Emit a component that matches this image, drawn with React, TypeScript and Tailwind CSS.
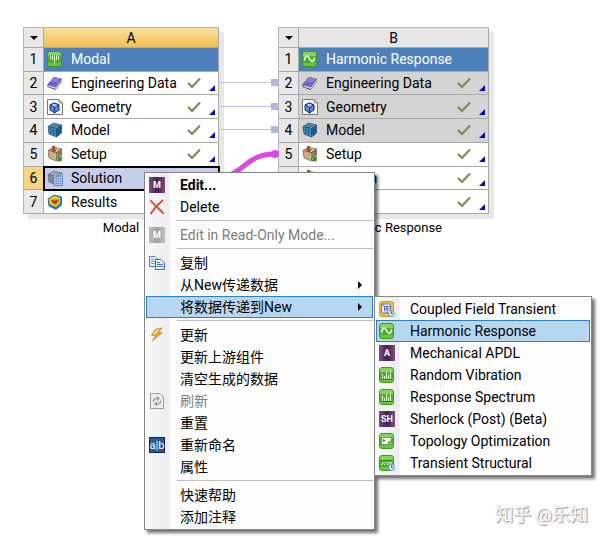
import type { ReactNode } from 'react'

type IconName =
  | 'modal'
  | 'harmonic'
  | 'random'
  | 'topology'
  | 'transient'
  | 'coupled'
  | 'book'
  | 'geometry'
  | 'model'
  | 'setup'
  | 'solution'
  | 'results'
  | 'delete'
  | 'copy'
  | 'update'
  | 'refresh'

interface Cell {
  label: string
  icon: IconName
  shared?: boolean
  selected?: boolean
  status?: boolean
}

interface MenuEntry {
  label: string
  icon?: IconName
  badge?: { text: string; className: string }
  bold?: boolean
  disabled?: boolean
  active?: boolean
  submenu?: boolean
}

const purple = 'bg-linear-to-r from-[#7a5084] via-[#43214f] to-[#7a5084] text-[9px] text-white font-bold'
const grey = 'bg-linear-to-r from-[#bdbdbd] via-[#a2a2a2] to-[#bdbdbd] text-[9px] text-white font-bold'
const rename = 'bg-[#2b5794] border border-[#10264a] text-[11px] text-white'

const modalCells: Cell[] = [
  { label: 'Engineering Data', icon: 'book', status: true },
  { label: 'Geometry', icon: 'geometry', status: true },
  { label: 'Model', icon: 'model', status: true },
  { label: 'Setup', icon: 'setup', status: true },
  { label: 'Solution', icon: 'solution', selected: true },
  { label: 'Results', icon: 'results' },
]

const harmonicCells: Cell[] = [
  { label: 'Engineering Data', icon: 'book', shared: true, status: true },
  { label: 'Geometry', icon: 'geometry', shared: true, status: true },
  { label: 'Model', icon: 'model', shared: true, status: true },
  { label: 'Setup', icon: 'setup', status: true },
  { label: 'Solution', icon: 'setup', status: true },
  { label: 'Results', icon: 'results', status: true },
]

const contextGroups: MenuEntry[][] = [
  [
    { label: 'Edit...', badge: { text: 'M', className: purple }, bold: true },
    { label: 'Delete', icon: 'delete' },
  ],
  [
    {
      label: 'Edit in Read-Only Mode...',
      badge: { text: 'M', className: grey },
      disabled: true,
    },
  ],
  [
    { label: '复制', icon: 'copy' },
    { label: '从New传递数据', submenu: true },
    { label: '将数据传递到New', submenu: true, active: true },
  ],
  [
    { label: '更新', icon: 'update' },
    { label: '更新上游组件' },
    { label: '清空生成的数据' },
    { label: '刷新', icon: 'refresh', disabled: true },
    { label: '重置' },
    { label: '重新命名', badge: { text: 'a|b', className: rename } },
    { label: '属性' },
  ],
  [{ label: '快速帮助' }, { label: '添加注释' }],
]

const transferGroups: MenuEntry[][] = [
  [
    { label: 'Coupled Field Transient', icon: 'coupled' },
    { label: 'Harmonic Response', icon: 'harmonic', active: true },
    { label: 'Mechanical APDL', badge: { text: 'A', className: purple } },
    { label: 'Random Vibration', icon: 'random' },
    { label: 'Response Spectrum', icon: 'random' },
    { label: 'Sherlock (Post) (Beta)', badge: { text: 'SH', className: purple } },
    { label: 'Topology Optimization', icon: 'topology' },
    { label: 'Transient Structural', icon: 'transient' },
  ],
]

function GreenTile({ children }: { children: ReactNode }) {
  return (
    <>
      <rect x="0.5" y="0.5" width="14" height="15" rx="2.5" fill="#4fae28" stroke="#3f9a20" />
      <path d="M1 3a2 2 0 0 1 2-2h9a2 2 0 0 1 2 2v2H1z" fill="#86d35f" />
      <path d="M1 12h13v1a2 2 0 0 1-2 2H3a2 2 0 0 1-2-2z" fill="#6cc63d" />
      {children}
    </>
  )
}

// leaning cube shared by the model, setup and solution icons
function Cube({ top, left, right, stroke }: Record<'top' | 'left' | 'right' | 'stroke', string>) {
  return (
    <g stroke={stroke} strokeWidth="0.7" strokeLinejoin="round">
      <path d="M1 4.500 6.500 1 14.500 3 9.500 6.500z" fill={top} />
      <path d="M1 4.500l8.500 2V15L2 12z" fill={left} />
      <path d="M9.500 6.500 14.500 3v8L9.500 15z" fill={right} />
    </g>
  )
}

const drawings: Record<IconName, ReactNode> = {
  modal: (
    <GreenTile>
      <path d="M2 4.500h11" stroke="#2b7a12" />
      <path d="M3.500 4v4M5.500 4v5M7.500 4v8M9.500 4v5M11.500 4v4" stroke="#eaffdc" fill="none" />
    </GreenTile>
  ),
  harmonic: (
    <GreenTile>
      <path
        d="M2.500 9C3.500 4 6 4 7.500 7.500S11.500 12 12.500 7"
        stroke="#fff"
        strokeWidth="1.6"
        strokeLinecap="round"
        fill="none"
      />
    </GreenTile>
  ),
  random: (
    <GreenTile>
      <path d="M2 12.500h11" stroke="#2b7a12" />
      <path d="M3.500 12V7M5.500 12V9M7.500 12V5M9.500 12V8M11.500 12V4" stroke="#eaffdc" fill="none" />
    </GreenTile>
  ),
  topology: (
    <GreenTile>
      <rect x="2.500" y="4.500" width="10" height="7" fill="#fff" stroke="#2b7a12" strokeWidth="0.600" />
      <path d="M4 6l3 1.500L4 9zM11.500 7v3.500H8z" fill="#338818" />
    </GreenTile>
  ),
  transient: (
    <GreenTile>
      <path d="M2 5.500h11" stroke="#2d7c13" />
      <path d="M2.500 10 5 6.500M5.500 10 8 6.500M8.500 10 11 6.500M11 10l2-3" stroke="#f1ffe8" fill="none" />
      <circle cx="12.500" cy="12.500" r="3" fill="#dbe8ff" stroke="#6f91cf" />
      <path d="M12.500 10.500v2h1.500" stroke="#34569b" fill="none" />
    </GreenTile>
  ),
  coupled: (
    <>
      <rect x="0.5" y="0.5" width="14" height="15" rx="2.5" fill="#efbd40" stroke="#d39c27" />
      <rect x="2.500" y="3" width="9" height="9" rx="1" fill="#e9ecf8" stroke="#6c79ae" />
      <path d="M5.500 10V5.500h6M5.500 8h6M8 5.500V12M2.500 3l3 2.500" stroke="#5268b0" fill="none" />
      <circle cx="12.500" cy="12.500" r="3" fill="#dbe8ff" stroke="#6f91cf" />
      <path d="M12.500 10.500v2h1.500" stroke="#34569b" fill="none" />
    </>
  ),
  book: (
    <>
      <path d="M.5 9.500 7 2l8 2v2.500L8.500 15 .5 12z" fill="#43358b" />
      <path d="M.5 9.500 7 2l8 2-6.500 8.500z" fill="#7361bd" />
      <path d="M3.500 6.500 7 2l7 1.700-3.200 4z" fill="#8c7cd0" />
      <path d="M8.700 12.500 15 4.500v1.500l-6.300 8-7.500-2.500.3-1.200z" fill="#e6e2f6" />
    </>
  ),
  geometry: (
    <>
      <path d="M.5.500H12l3.500 3.500v11.500H.5z" fill="#fbfbfb" stroke="#777" />
      <path d="M12 .5V4h3.500z" fill="#ddd" stroke="#777" strokeWidth="0.7" />
      <path d="M3 6 7.500 4 12 6v5L7.500 14 3 11z" fill="#5f88d6" stroke="#142f70" />
      <path d="M3 6l4.500 2.500L12 6 7.500 4z" fill="#a9c6f4" stroke="#142f70" />
      <path d="M7.500 8.500V14" stroke="#142f70" />
    </>
  ),
  model: (
    <>
      <Cube top="#86c8e4" left="#4a98c2" right="#2b6b96" stroke="#174a6d" />
      <path
        d="M3.800 5.200v7.500M6.600 5.900v8M1.300 7l8.200 2.200L14.500 5.500M1.600 9.500l7.900 2.600 5-3.600M11.200 5.300v8.200M12.900 4.200v8M2.900 3.300l8.300 2M4.700 2.200l8.200 2M3.800 5.200 9.200 1.700M6.600 5.900l5.300-3.500"
        stroke="#174a6d"
        strokeWidth="0.6"
        fill="none"
      />
    </>
  ),
  setup: (
    <>
      <Cube top="#dccbaa" left="#c8b08a" right="#8f744f" stroke="#6f5a3d" />
      <path d="M5 0h3v3h2L7 7 3.500 3H5z" fill="#b5482f" />
      <path d="M8.500 9.500 10 8l3 3 2-2v6.500H8.500l2.500-2.500z" fill="#3f8f2c" stroke="#e8f3df" strokeWidth="0.5" />
    </>
  ),
  solution: (
    <>
      <Cube top="#a9adb5" left="#858a93" right="#686d76" stroke="#5d6067" />
      <rect x="7" y="4" width="8.500" height="11.500" fill="#c6d6f3" stroke="#5374b4" strokeWidth="0.800" />
      <path d="M8.500 6h5.500" stroke="#446bb5" strokeWidth="1.300" />
      <path
        d="M8.500 8.500h6M8.500 11h6M8.500 13.500h6"
        stroke="#446bb5"
        strokeWidth="1.400"
        strokeDasharray="1.300 0.900"
      />
    </>
  ),
  results: (
    <>
      <path d="M1 5 7 1l7.500 2v8L9 15.300 2 12z" fill="#2c6fcd" stroke="#1c3768" strokeWidth="0.700" />
      <path d="M1.500 5.300 7 1.500l6.500 2v6.500L9 13.500l-6.500-3z" fill="#3ccb5b" />
      <path d="M2 5.500 7 2.300l6 1.700-1 5-3.500 3.500L3.500 10z" fill="#f3ec35" />
      <path d="M3 5.500l5-1.500 4.500 1-1.500 4-2.500 2.500-4-2z" fill="#f59d20" />
      <path d="M4 5.800l4.500 1L12 5l-1.500 3.500-2 2L5.500 8.500z" fill="#de2c1e" />
    </>
  ),
  delete: (
    <>
      <path d="M2 2c3 3 8 8 12 12" stroke="#e0513c" strokeWidth="2.200" strokeLinecap="round" fill="none" />
      <path d="M13.500 1.500C9 5 5 9.500 2 14.500" stroke="#d6452f" strokeWidth="1.800" strokeLinecap="round" fill="none" />
      <path d="M2.500 2l5 5" stroke="#f08b78" strokeWidth="0.800" />
    </>
  ),
  copy: (
    <>
      <path d="M.5 1.500H6l2.500 2.500v7.500h-8z" fill="#e4edfb" stroke="#5d86c0" />
      <path d="M2 4.500h3M2 6.500h5M2 8.500h5" stroke="#7ba0d4" />
      <path d="M6.500 4.500H12L15.500 8v6.500h-9z" fill="#eef4fd" stroke="#376bb2" />
      <path d="M8 7.500h3M8 9.500h6M8 11.500h6" stroke="#3f78c1" />
    </>
  ),
  update: (
    <>
      <path d="M6 2.500 13 1 9.500 5.500h4L3.500 14 6.500 8.500H2.500z" fill="#f0a42b" stroke="#b98139" strokeWidth="0.700" />
      <path d="M6.500 3.500 11 2.500 6 7.500H4z" fill="#fbd98a" />
    </>
  ),
  refresh: (
    <>
      <path d="M1.500.500H11L14.500 4v11.500h-13z" fill="#ececec" stroke="#9c9c9c" />
      <path d="M4.500 9c-.5-3 2-4 4-3.500M11.500 7.500c.5 3-2 4-4 3.500" stroke="#9b9b9b" strokeWidth="1.300" fill="none" />
      <path d="M8 3l3 2.500L8 8zM8 8.500 5 11l3 2.500z" fill="#9b9b9b" />
    </>
  ),
}

function Icon({ name }: { name: IconName }) {
  return (
    <svg className="size-4 shrink-0" viewBox="0 0 16 16" aria-hidden="true">
      {drawings[name]}
    </svg>
  )
}

function StatusMarks() {
  return (
    <>
      <svg className="ml-auto h-3 w-3.5" viewBox="0 0 14 12" role="img" aria-label="Up to date">
        <path d="M1 6 5 10 13 1.500" stroke="#7d8a56" strokeWidth="2.200" fill="none" />
        <path d="M5 8.500 12 1.500" stroke="#a3ad84" strokeWidth="0.700" />
      </svg>
      <svg className="mb-0.5 ml-2 size-1.5 self-end" viewBox="0 0 6 6" aria-hidden="true">
        <path d="M6 0v6H0z" fill="#0808a8" />
      </svg>
    </>
  )
}

interface SystemProps {
  column: string
  title: string
  icon: IconName
  cells: Cell[]
  highlighted?: boolean
}

function SystemTable({ column, title, icon, cells, highlighted }: SystemProps) {
  const edge = 'border-r border-b border-[#a9a9a9] p-0'
  return (
    <figure>
      <table className="h-[187px] w-full table-fixed border-separate border-spacing-0 border-t border-l border-[#b5b5b5] shadow-[5px_5px_0_#e7e7e7]">
        <thead>
          <tr className="h-5">
            <th className={`${edge} w-5 bg-[#e8e8e8]`}>
              <button
                type="button"
                className="flex h-4 w-full items-center justify-center"
                aria-label={`${title} menu`}
              >
                <svg className="h-1 w-2" viewBox="0 0 8 4">
                  <path d="M0 0h8L4 4z" fill="#000" />
                </svg>
              </button>
            </th>
            <th
              className={`${edge} leading-4 font-normal ${
                highlighted ? 'bg-linear-to-b from-[#fbe09a] to-[#efbf50]' : 'bg-[#e6e6e6]'
              }`}
            >
              {column}
            </th>
          </tr>
        </thead>
        <tbody>
          <tr>
            <td className={`${edge} bg-[#e8e8e8] text-center`}>1</td>
            <td className={`${edge} bg-[#4e81bc] text-white`}>
              <div className="flex items-center gap-2 pl-[3px]">
                <Icon name={icon} />
                {title}
              </div>
            </td>
          </tr>
          {cells.map((cell, i) => (
            <tr key={cell.label}>
              <td className={`${edge} text-center ${cell.selected ? 'bg-[#f8d380]' : 'bg-[#e8e8e8]'}`}>
                {i + 2}
              </td>
              <td
                className={`${edge} ${
                  cell.selected
                    ? 'bg-[#c5cde9] outline-2 -outline-offset-1 outline-black'
                    : cell.shared
                      ? 'bg-[#d4d4d4]'
                      : 'bg-white'
                }`}
              >
                <div className="flex h-5 items-center px-[3px]">
                  <Icon name={cell.icon} />
                  <span className="ml-2">{cell.label}</span>
                  {cell.status && <StatusMarks />}
                </div>
              </td>
            </tr>
          ))}
        </tbody>
      </table>
      <figcaption className="mt-1 text-center text-[13px] leading-5">{title}</figcaption>
    </figure>
  )
}

function Links() {
  return (
    <svg className="absolute top-[76px] left-[218px] h-[110px] w-[62px]" viewBox="0 0 62 110" aria-hidden="true">
      <path d="M0 6.500h54M0 30.500h54M0 53.500h54" stroke="#c3c4e4" fill="none" />
      <path d="M53 3h7v7h-7zM53 27h7v7h-7zM53 50h7v7h-7z" fill="#b4b5dc" />
      <path d="M0 101C24 101 28 78 56 78" stroke="#dc46e4" strokeWidth="5" fill="none" />
      <circle cx="57" cy="78" r="4" fill="#dc46e4" />
    </svg>
  )
}

function Menu({ label, groups }: { label: string; groups: MenuEntry[][] }) {
  return (
    <div
      role="menu"
      aria-label={label}
      className="border border-[#868686] bg-linear-to-r from-[#fafafa] from-0% via-[#ececf0] via-[24px] to-[#fdfdfd] to-[25px] p-px shadow-[3px_3px_3px_rgba(0,0,0,0.55)]"
    >
      {groups.map((group, g) => (
        <div key={group[0].label} role="group">
          {g > 0 && <hr className="mt-0.5 mb-[3px] ml-[31px] border-[#bdbdbd]" />}
          {group.map((item) => (
            <button
              key={item.label}
              type="button"
              role="menuitem"
              disabled={item.disabled}
              className={`flex h-[22px] w-full items-center border px-0.5 text-left whitespace-nowrap ${
                item.active ? 'border-[#2f7fc6] bg-[#b5d7f2]' : 'border-transparent'
              } ${item.disabled ? 'text-[#7d7d7d]' : 'text-black'} ${item.bold ? 'font-bold' : ''}`}
            >
              <span className="mr-[15px] flex size-4 shrink-0 items-center justify-center">
                {item.icon && <Icon name={item.icon} />}
                {item.badge && (
                  <span className={`flex size-4 items-center justify-center leading-none ${item.badge.className}`}>
                    {item.badge.text}
                  </span>
                )}
              </span>
              {item.label}
              {item.submenu && (
                <svg className="mr-2 ml-auto h-2 w-1" viewBox="0 0 4 8" aria-hidden="true">
                  <path d="M0 0v8l4-4z" fill="#000" />
                </svg>
              )}
            </button>
          ))}
        </div>
      ))}
    </div>
  )
}

function App() {
  return (
    <main className="relative min-h-screen overflow-hidden bg-white font-['Roboto','Noto_Sans_CJK_SC',sans-serif] text-sm leading-5 text-black">
      <div className="absolute top-[27px] left-[23px] w-[196px]">
        <SystemTable column="A" title="Modal" icon="modal" cells={modalCells} highlighted />
      </div>
      <div className="absolute top-[27px] left-[278px] w-[211px]">
        <SystemTable column="B" title="Harmonic Response" icon="harmonic" cells={harmonicCells} />
      </div>
      <Links />
      <div className="absolute top-[172px] left-[144px] w-[231px]">
        <Menu label="Solution" groups={contextGroups} />
      </div>
      <div className="absolute top-[296px] left-[374px] w-[218px]">
        <Menu label="将数据传递到New" groups={transferGroups} />
      </div>
      <p className="absolute right-4 bottom-3 text-lg leading-6 text-white [text-shadow:1px_1px_1px_#8f8f8f,0_0_1px_#b0b0b0]">
        知乎 @乐知
      </p>
    </main>
  )
}

export default App
